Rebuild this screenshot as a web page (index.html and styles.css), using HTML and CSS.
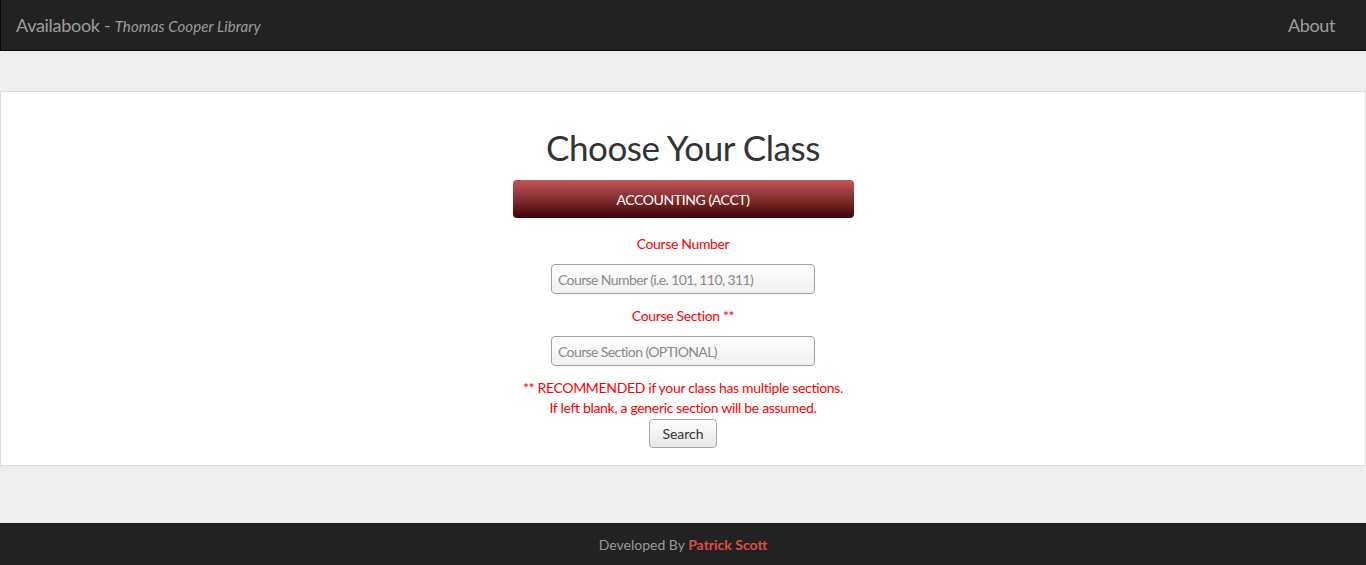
FILE: index.html
```html
<!DOCTYPE html>
<html lang="en">
<head>
<meta charset="utf-8">
<title>Availabook - Thomas Cooper Library</title>
<link rel="stylesheet" href="styles.css">
</head>
<body>
<div class="page">
  <nav class="navbar">
    <div class="brand">Availabook - <em class="sub">Thomas Cooper Library</em></div>
    <a class="nav-link" href="#">About</a>
  </nav>
  <main class="panel">
    <h1 class="title">Choose Your Class</h1>
    <button class="dept-btn" type="button">ACCOUNTING (ACCT)</button>
    <label class="field-label">Course Number</label>
    <input class="field" type="text" placeholder="Course Number (i.e. 101, 110, 311)">
    <label class="field-label label-2">Course Section **</label>
    <input class="field" type="text" placeholder="Course Section (OPTIONAL)">
    <p class="note">** RECOMMENDED if your class has multiple sections.<br>If left blank, a generic section will be assumed.</p>
    <button class="search-btn" type="button">Search</button>
  </main>
  <footer class="footer">Developed By <a class="author" href="#">Patrick Scott</a></footer>
</div>
</body>
</html>
```

FILE: styles.css
```css
* { box-sizing: border-box; }
html, body { margin: 0; padding: 0; }
body {
  background: #eeeeee;
  font-family: Lato, "Open Sans", "Liberation Sans", sans-serif;
  font-size: 14px;
  line-height: 20px;
  color: #333;
}
.page {
  min-height: 100vh;
  display: flex;
  flex-direction: column;
}
.navbar {
  height: 51px;
  background: #222222;
  border-left: 1px solid #080808;
  border-bottom: 1px solid #080808;
  display: flex;
  align-items: center;
  justify-content: space-between;
  padding: 0 31px 0 15px;
}
.brand {
  color: #9d9d9d;
  font-size: 18px;
  line-height: 20px;
  letter-spacing: -0.3px;
}
.sub {
  font-size: 15px;
  font-style: italic;
  letter-spacing: 0.1px;
}
.nav-link {
  color: #9d9d9d;
  font-size: 18px;
  letter-spacing: -0.4px;
  text-decoration: none;
}
.panel {
  margin-top: 40px;
  background: #fff;
  border: 1px solid #dddddd;
  height: 375px;
  display: flex;
  flex-direction: column;
  align-items: center;
  padding: 35px 15px 16px;
}
.title {
  margin: 0;
  font-size: 35px;
  line-height: 40px;
  font-weight: 400;
  letter-spacing: -0.45px;
  color: #333;
}
.dept-btn {
  margin-top: 13px;
  width: 341px;
  height: 38px;
  border: none;
  border-radius: 4px;
  background: linear-gradient(to bottom, #c25555 0%, #7d2a2b 55%, #3f0203 100%);
  color: #fff;
  font-family: inherit;
  font-size: 14px;
  letter-spacing: -0.4px;
}
.field-label {
  display: block;
  margin-top: 16px;
  color: #ff0000;
  font-size: 14px;
  line-height: 20px;
  letter-spacing: -0.35px;
}
.label-2 { margin-top: 12px; }
.field {
  margin-top: 10px;
  width: 264px;
  height: 30px;
  border: 1px solid #a0a0a0;
  border-radius: 4px;
  background: linear-gradient(to bottom, #ffffff, #f0f0f0);
  padding: 0 6px;
  font-family: inherit;
  font-size: 14px;
  letter-spacing: -0.6px;
  color: #555;
}
.field::placeholder { color: #8a8a8a; }
.note {
  margin: 12px 0 0;
  color: #ff0000;
  text-align: center;
  font-size: 14px;
  line-height: 20px;
  letter-spacing: -0.32px;
}
.search-btn {
  margin-top: 1px;
  width: 68px;
  height: 29px;
  border: 1px solid #a8a8a8;
  border-radius: 4px;
  background: linear-gradient(to bottom, #ffffff, #e6e6e6);
  color: #333;
  font-family: inherit;
  font-size: 14px;
}
.footer {
  margin-top: auto;
  height: 42px;
  background: #222222;
  color: #999999;
  text-align: center;
  line-height: 44px;
  font-size: 14px;
}
.author {
  color: #e04a4a;
  font-weight: 700;
  text-decoration: none;
}
```
